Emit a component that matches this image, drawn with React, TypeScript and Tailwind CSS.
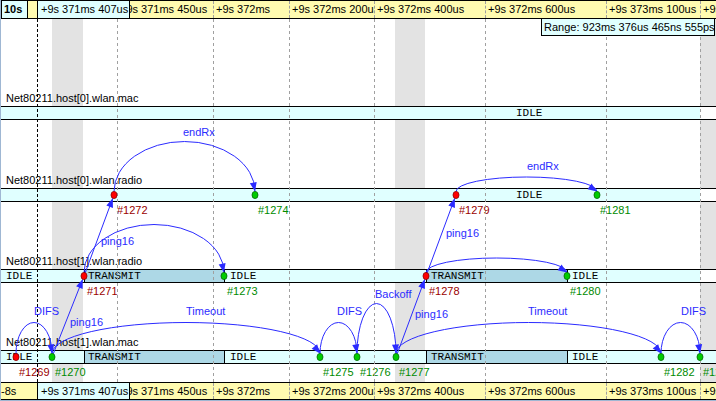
import React from 'react';

type Seg = { cls: string; text?: string };
type Ev = { x: number; n: string; red?: boolean };
type Lane = { name: string; block: string; cy: number; segs: Seg[]; events: Ev[] };
type Arc = { x1: number; x2: number; y: number; h: number };
type Line = { x1: number; y1: number; x2: number; y2: number };

const TICKS = [
  { x: 117, label: '+9s 371ms 450us' },
  { x: 213, label: '+9s 372ms' },
  { x: 289, label: '+9s 372ms 200us' },
  { x: 374, label: '+9s 372ms 400us' },
  { x: 485, label: '+9s 372ms 600us' },
  { x: 606, label: '+9s 373ms 100us' },
  { x: 700, label: '+9s 373ms 200us' },
];

const BANDS = [
  { x: 52, w: 31 },
  { x: 395, w: 30 },
  { x: 700, w: 16 },
];

const idleWide: Seg[] = [
  { cls: 'w-[699px] bg-[#e0ffff] pl-[515px]', text: 'IDLE' },
  { cls: 'w-[16px] bg-white' },
];

const LANES: Lane[] = [
  { name: 'Net80211.host[0].wlan.mac', block: 'h-[82px]', cy: 113, segs: idleWide, events: [] },
  {
    name: 'Net80211.host[0].wlan.radio',
    block: 'h-[81px]',
    cy: 195,
    segs: idleWide,
    events: [
      { x: 114, n: '#1272', red: true },
      { x: 255, n: '#1274' },
      { x: 456, n: '#1279', red: true },
      { x: 597, n: '#1281' },
    ],
  },
  {
    name: 'Net80211.host[1].wlan.radio',
    block: 'h-[81px]',
    cy: 276,
    segs: [
      { cls: 'w-[83px] bg-[#e0ffff] pl-[5px]', text: 'IDLE' },
      { cls: 'w-[140px] bg-[#add8e6] border-l border-black pl-[3px]', text: 'TRANSMIT' },
      { cls: 'w-[202px] bg-[#e0ffff] border-l border-black pl-[5px]', text: 'IDLE' },
      { cls: 'w-[141px] bg-[#add8e6] border-l border-black pl-[4px]', text: 'TRANSMIT' },
      { cls: 'w-[133px] bg-[#e0ffff] border-l border-black pl-[4px]', text: 'IDLE' },
      { cls: 'w-[16px] bg-white' },
    ],
    events: [
      { x: 84, n: '#1271', red: true },
      { x: 224, n: '#1273' },
      { x: 426, n: '#1278', red: true },
      { x: 567, n: '#1280' },
    ],
  },
  {
    name: 'Net80211.host[1].wlan.mac',
    block: '',
    cy: 357,
    segs: [
      { cls: 'w-[83px] bg-[#e0ffff] pl-[5px]', text: 'IDLE' },
      { cls: 'w-[140px] bg-[#add8e6] border-l border-black pl-[3px]', text: 'TRANSMIT' },
      { cls: 'w-[202px] bg-[#e0ffff] border-l border-black pl-[5px]', text: 'IDLE' },
      { cls: 'w-[141px] bg-[#add8e6] border-l border-black pl-[4px]', text: 'TRANSMIT' },
      { cls: 'w-[149px] bg-[#e0ffff] border-l border-black pl-[4px]', text: 'IDLE' },
    ],
    events: [
      { x: 16, n: '#1269', red: true },
      { x: 52, n: '#1270' },
      { x: 320, n: '#1275' },
      { x: 357, n: '#1276' },
      { x: 396, n: '#1277' },
      { x: 661, n: '#1282' },
      { x: 700, n: '#1283' },
    ],
  },
];

const ARCS: Arc[] = [
  { x1: 16, x2: 52, y: 353.5, h: 31 },
  { x1: 52, x2: 320, y: 353.5, h: 31 },
  { x1: 320, x2: 357, y: 353.5, h: 31 },
  { x1: 357, x2: 396, y: 353.5, h: 50 },
  { x1: 396, x2: 661, y: 353.5, h: 31 },
  { x1: 661, x2: 700, y: 353.5, h: 31 },
  { x1: 84, x2: 224, y: 272.5, h: 48 },
  { x1: 426, x2: 567, y: 272.5, h: 14.5 },
  { x1: 114, x2: 255, y: 191.5, h: 50 },
  { x1: 456, x2: 597, y: 191.5, h: 14.5 },
];

const LINES: Line[] = [
  { x1: 52, y1: 357, x2: 84, y2: 276 },
  { x1: 84, y1: 276, x2: 114, y2: 195 },
  { x1: 396, y1: 357, x2: 426, y2: 276 },
  { x1: 426, y1: 276, x2: 456, y2: 195 },
];

const LABELS = [
  { x: 34, y: 311, t: 'DIFS' },
  { x: 186, y: 311, t: 'Timeout' },
  { x: 70, y: 322, t: 'ping16' },
  { x: 101, y: 241, t: 'ping16' },
  { x: 183, y: 132, t: 'endRx' },
  { x: 337, y: 311, t: 'DIFS' },
  { x: 375, y: 294, t: 'Backoff' },
  { x: 415, y: 314, t: 'ping16' },
  { x: 528, y: 311, t: 'Timeout' },
  { x: 681, y: 311, t: 'DIFS' },
  { x: 446, y: 233, t: 'ping16' },
  { x: 527, y: 166, t: 'endRx' },
];

const BLUE = '#2b2bff';

// filled arrow head, tip at (tx,ty) pointing along (ux,uy)
const head = (tx: number, ty: number, ux: number, uy: number) => {
  const L = 9;
  const W = 3.5;
  const bx = tx - ux * L;
  const by = ty - uy * L;
  return `${tx},${ty} ${bx - uy * W},${by + ux * W} ${bx + uy * W},${by - ux * W}`;
};

const arcDir = (a: Arc) => {
  const rx = (a.x2 - a.x1) / 2;
  const cx = a.x1 + rx;
  let t = 0;
  let px = a.x2;
  let py = a.y;
  while (t < Math.PI / 2) {
    t += 0.002;
    px = cx + rx * Math.cos(t);
    py = a.y - a.h * Math.sin(t);
    if (Math.hypot(a.x2 - px, a.y - py) >= 14) break;
  }
  const d = Math.hypot(a.x2 - px, a.y - py);
  return [(a.x2 - px) / d, (a.y - py) / d];
};

const Ruler: React.FC<{ top?: boolean }> = ({ top }) => (
  <div
    className={`relative flex shrink-0 overflow-hidden border-y border-black bg-[#fffbb0] text-[11px] text-black ${
      top ? 'h-[19px] leading-[17px]' : 'h-[18px] leading-[16px]'
    }`}
  >
    {top ? (
      <>
        <div className="relative z-10 w-[27px] shrink-0 border-x border-black bg-[#e0ffff] pl-[2px] font-bold">10s</div>
        <div className="w-[9px] shrink-0" />
      </>
    ) : (
      <div className="w-[36px] shrink-0 whitespace-nowrap">-8s</div>
    )}
    <div className="relative z-10 w-[93px] shrink-0 overflow-hidden whitespace-nowrap border-x border-black bg-[#e0ffff] pl-[3px]">
      +9s 371ms 407us
    </div>
    {TICKS.map((t, i) => {
      const next = i < TICKS.length - 1 ? TICKS[i + 1].x : 716;
      return (
        <div
          key={t.x}
          className="absolute top-0 bottom-0 overflow-hidden whitespace-nowrap border-l border-dashed border-[#a0a0a0] pl-[2px]"
          style={{ left: t.x - 1, width: next - t.x }}
        >
          {t.label}
        </div>
      );
    })}
  </div>
);

const App: React.FC = () => {
  return (
    <div className="relative flex h-[401px] w-[716px] flex-col overflow-hidden border-b border-l border-[#9fb7d3] bg-white font-['Liberation_Sans',Arial,sans-serif] text-[11px]">
      <Ruler top />

      <div className="relative h-[363px] shrink-0">
        {BANDS.map(b => (
          <div key={b.x} className="absolute top-0 bottom-0 bg-[#e3e3e3]" style={{ left: b.x - 1, width: b.w }} />
        ))}

        <div className="relative flex flex-col pt-[72px]">
          {LANES.map(lane => (
            <div key={lane.name} className={`flex flex-col ${lane.block}`}>
              <div className="h-[14px] whitespace-nowrap pl-[5px] leading-[14px] text-black">{lane.name}</div>
              <div className="mt-[1px] flex h-[14px] border-y border-black font-['Liberation_Mono',monospace] text-[11px] leading-[12px] text-black">
                {lane.segs.map((s, i) => (
                  <div key={i} className={`shrink-0 overflow-hidden whitespace-nowrap ${s.cls}`}>
                    {s.text}
                  </div>
                ))}
              </div>
              <div className="relative mt-[1px] h-[14px] leading-[14px]">
                {lane.events.map(e => (
                  <span
                    key={e.n}
                    className={`absolute top-0 whitespace-nowrap ${e.red ? 'text-[#9a0000]' : 'text-[#008a00]'}`}
                    style={{ left: e.x + 2 }}
                  >
                    {e.n}
                  </span>
                ))}
              </div>
            </div>
          ))}
        </div>

        <svg className="pointer-events-none absolute left-0 top-0" width={715} height={363} viewBox="1 19 715 363">
          {TICKS.map(t => (
            <line key={t.x} x1={t.x + 0.5} y1={19} x2={t.x + 0.5} y2={382} stroke="#a0a0a0" strokeDasharray="3 3" />
          ))}
          <line x1={37.5} y1={19} x2={37.5} y2={382} stroke="#000" strokeDasharray="3 2" />

          {ARCS.map((a, i) => {
            const [ux, uy] = arcDir(a);
            return (
              <g key={i}>
                <path
                  d={`M ${a.x1} ${a.y} A ${(a.x2 - a.x1) / 2} ${a.h} 0 0 1 ${a.x2} ${a.y}`}
                  fill="none"
                  stroke={BLUE}
                  strokeWidth={1}
                />
                <polygon points={head(a.x2, a.y, ux, uy)} fill={BLUE} />
              </g>
            );
          })}

          {LINES.map((l, i) => {
            const d = Math.hypot(l.x2 - l.x1, l.y2 - l.y1);
            const ux = (l.x2 - l.x1) / d;
            const uy = (l.y2 - l.y1) / d;
            const tx = l.x2 - ux * 3.5;
            const ty = l.y2 - uy * 3.5;
            return (
              <g key={i}>
                <line x1={l.x1} y1={l.y1} x2={tx} y2={ty} stroke={BLUE} strokeWidth={1} />
                <polygon points={head(tx, ty, ux, uy)} fill={BLUE} />
              </g>
            );
          })}

          {LANES.map(lane =>
            lane.events.map(e => (
              <ellipse
                key={e.n}
                cx={e.x}
                cy={lane.cy}
                rx={3}
                ry={3.6}
                fill={e.red ? '#ff0000' : '#00cc00'}
                stroke={e.red ? '#8a0000' : '#006a00'}
                strokeWidth={0.8}
              />
            ))
          )}
        </svg>

        {LABELS.map((l, i) => (
          <span
            key={i}
            className="absolute whitespace-nowrap leading-[14px] text-[#2b2bff]"
            style={{ left: l.x - 1, top: l.y - 7 - 19 }}
          >
            {l.t}
          </span>
        ))}
      </div>

      <Ruler />

      <div className="absolute left-[540px] top-[18px] z-20 h-[18px] w-[174px] whitespace-nowrap border border-black bg-[#e0ffff] pl-[2px] leading-[16px] text-black">
        Range: 923ms 376us 465ns 555ps
      </div>
    </div>
  );
};

export default App;
